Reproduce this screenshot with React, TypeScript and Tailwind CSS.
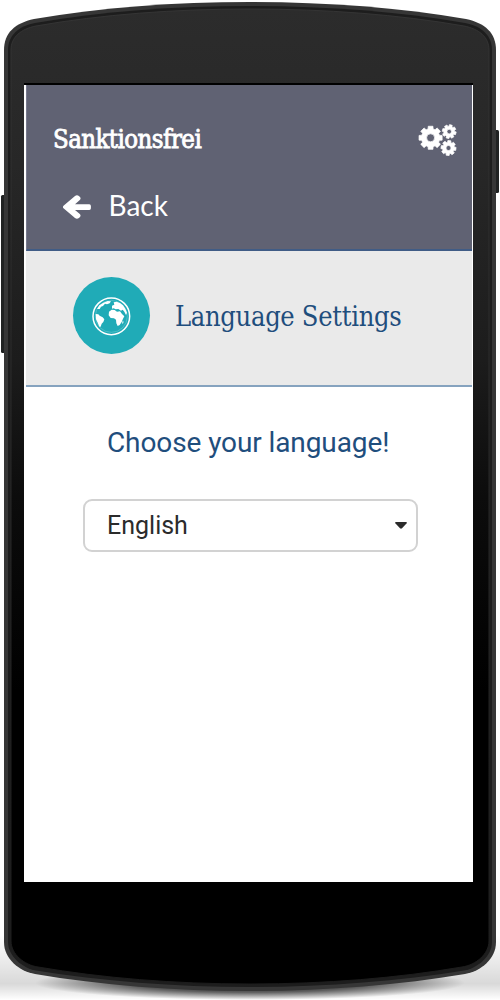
import React from "react";

function gearPath(cx: number, cy: number, outer: number, inner: number, hole: number, turn: number) {
  const pts: string[] = [];
  for (let i = 0; i < 8; i++) {
    const mid = (i * Math.PI) / 4 + turn;
    const corners: [number, number][] = [
      [-0.28, inner],
      [-0.2, outer],
      [0.2, outer],
      [0.28, inner],
    ];
    for (const [a, r] of corners) {
      pts.push(`${(cx + r * Math.cos(mid + a)).toFixed(2)},${(cy + r * Math.sin(mid + a)).toFixed(2)}`);
    }
  }
  return `M${pts.join("L")}ZM${cx - hole},${cy}a${hole},${hole} 0 1 0 ${hole * 2},0a${hole},${hole} 0 1 0 ${-hole * 2},0Z`;
}

function CogsIcon() {
  return (
    <svg className="mt-1 h-10 w-11 fill-white stroke-white" viewBox="415 120 44 40" strokeWidth="0.7" strokeLinejoin="round">
      <path fillRule="evenodd" d={gearPath(430.6, 137.8, 11.8, 9.2, 4, 0)} />
      <path fillRule="evenodd" d={gearPath(449.2, 131.6, 7, 5.4, 2.3, 0.25)} />
      <path fillRule="evenodd" d={gearPath(448.5, 148, 7.6, 5.9, 2.5, 0.12)} />
    </svg>
  );
}

function BackArrow() {
  return (
    <svg className="h-6 w-7 shrink-0" viewBox="0 0 28 24" fill="white">
      <path d="M.5 10.700L12 .9C13.200 0 14.800 0 15.900 .9L17 2.100C17.900 3 17.700 4.200 16.800 5.100L12 9.300H26.300Q27.900 9.300 27.900 10.900V13.300Q27.900 14.900 26.300 14.900H12L16.800 19C17.700 19.900 17.800 21 17 21.900L15.900 23.100C14.800 24 13.200 24 12 23.100L.5 13.300Q-.7 12 .5 10.700Z" />
    </svg>
  );
}

function GlobeIcon() {
  return (
    <svg className="h-[39px] w-[39px]" viewBox="98 113 117 117">
      <circle cx="156" cy="171" r="55" fill="none" stroke="white" strokeWidth="4.5" />
      <circle cx="156" cy="171" r="48" fill="none" stroke="white" strokeWidth="1" opacity="0.6" />
      <g fill="white">
        <path d="M109 164L117 165L121 169L130 174L135 180L132 188L127 193L124 202L120 202L115 190L110 180Z" />
        <path d="M149 157L157 151L166 152L173 157L182 156L188 164L195 171L191 178L187 188L181 197L175 200L171 192L170 181L164 177L154 176L148 168Z" />
        <path d="M158 148L158 139L165 136L163 129L172 127L182 131L191 138L198 148L203 160L200 167L195 157L190 151L185 154L177 149L169 150L163 147Z" />
        <path d="M113 149L120 138L132 130L145 125L155 126L151 132L143 135L137 133L131 140L125 142L121 149Z" />
        <path d="M189 187L192 184L192 191L189 194Z" />
      </g>
    </svg>
  );
}

function PhoneBody() {
  const shell =
    "M4 50C4 33 15 23 34 19C101 7.500 174 2 250 2C326 2 399 7.500 466 19C485 23 496 33 496 50V942C496 959 481 971 465 974C400 985 326 991 250 991C174 991 100 985 35 974C19 971 4 959 4 942Z";
  const rim =
    "M8 50C8 36 18 26 35 23C101 11.500 174 6 250 6C326 6 399 11.500 465 23C482 26 492 36 492 50V942C492 956 478 968 464 970.5C399 981 326 987 250 987C174 987 101 981 36 970.5C22 968 8 956 8 942Z";
  const face =
    "M11 50C11 37 21 29 36 26C102 14.500 174 9 250 9C326 9 398 14.500 464 26C479 29 489 37 489 50V941C489 954 476 965 462 967C398 978 326 984 250 984C174 984 102 978 38 967C24 965 11 954 11 941Z";
  return (
    <svg className="absolute inset-0 h-[1000px] w-[500px]" viewBox="0 0 500 1000" aria-hidden="true">
      <defs>
        <linearGradient id="face" x1="0" y1="0" x2="0" y2="1">
          <stop offset="0" stopColor="#2c2c2c" />
          <stop offset="0.16" stopColor="#272727" />
          <stop offset="0.36" stopColor="#1c1c1c" />
          <stop offset="0.5" stopColor="#0c0c0c" />
          <stop offset="0.7" stopColor="#000" />
        </linearGradient>
        <linearGradient id="edge" x1="0" y1="0" x2="0" y2="1">
          <stop offset="0" stopColor="#343434" />
          <stop offset="1" stopColor="#1c1c1c" />
        </linearGradient>
        <radialGradient id="shade">
          <stop offset="0" stopColor="#000" stopOpacity="0.95" />
          <stop offset="0.55" stopColor="#000" stopOpacity="0.6" />
          <stop offset="1" stopColor="#000" stopOpacity="0" />
        </radialGradient>
        <linearGradient id="floor" x1="0" y1="0" x2="0" y2="1">
          <stop offset="0" stopColor="#000" stopOpacity="0" />
          <stop offset="0.75" stopColor="#000" stopOpacity="0.15" />
          <stop offset="1" stopColor="#000" stopOpacity="0" />
        </linearGradient>
      </defs>
      <rect x="0" y="935" width="500" height="65" fill="url(#floor)" />
      <ellipse cx="250" cy="983" rx="215" ry="17" fill="url(#shade)" />
      <rect x="1" y="195" width="6" height="158" rx="1.5" fill="#202222" />
      <rect x="493" y="130" width="6" height="63" rx="1.5" fill="#202222" />
      <path d={shell} fill="#363636" />
      <path d={rim} fill="#1d1d1d" />
      <path d={face} fill="url(#face)" stroke="url(#edge)" strokeWidth="1" />
    </svg>
  );
}

export default function App() {
  return (
    <div className="relative h-[1000px] w-[500px] overflow-hidden bg-white">
      <PhoneBody />
      <div className="relative pt-[83px] pl-6">
        <main className="flex h-[799px] w-[449px] flex-col border-t-2 border-black bg-white">
          <div className="mr-[1.5px] ml-0.5">
            <header className="h-[166px] border-b-2 border-l border-b-[#405c86] border-l-[#77798d] bg-[#606273] text-white">
              <div className="flex h-[106px] items-center justify-between pr-[13px] pl-[26px]">
                <h1 className="mt-0.5 font-['DejaVu_Serif_Condensed','DejaVu_Serif',serif] text-[25.5px] leading-8 tracking-[-0.55px] font-stretch-condensed [-webkit-text-stroke:0.8px_white]">
                  Sanktionsfrei
                </h1>
                <CogsIcon />
              </div>
              <a className="flex items-center gap-[18px] pl-[35.5px]">
                <BackArrow />
                <span className="-mt-1 font-['Lato',sans-serif] text-[28px] leading-9">Back</span>
              </a>
            </header>
            <section className="flex h-[136px] items-center gap-[25px] border-b-2 border-[#86a3bf] bg-[#eaeaea] pl-[47px]">
              <div className="mb-1.5 flex h-[77px] w-[77px] items-center justify-center rounded-full bg-[#20abb7] pt-0.5">
                <GlobeIcon />
              </div>
              <h2 className="mb-0.5 font-['DejaVu_Serif_Condensed','DejaVu_Serif',serif] text-[27px] leading-9 tracking-[-0.3px] text-[#1f4e7d] font-stretch-condensed">
                Language Settings
              </h2>
            </section>
          </div>
          <section className="flex flex-col px-[59px] pt-[38px]">
            <p className="pl-[24px] font-['Roboto',sans-serif] text-[28px] leading-9 tracking-[-0.1px] text-[#1f4e7d]">
              Choose your language!
            </p>
            <button className="mt-[38px] flex h-[53px] w-[335px] items-center justify-between rounded-[9px] border-2 border-[#d2d2d2] bg-white pr-[9px] pl-[22px]">
              <span className="font-['Roboto',sans-serif] text-[25px] leading-8 text-[#2b2b2b]">English</span>
              <svg className="h-[7px] w-3 fill-[#2b2b2b]" viewBox="0 0 12 7">
                <path d="M1 0H11Q12.500 .3 11.500 1.500L7 6.300Q6 7.200 5 6.300L.5 1.500Q-.5 .3 1 0Z" />
              </svg>
            </button>
          </section>
        </main>
      </div>
    </div>
  );
}
